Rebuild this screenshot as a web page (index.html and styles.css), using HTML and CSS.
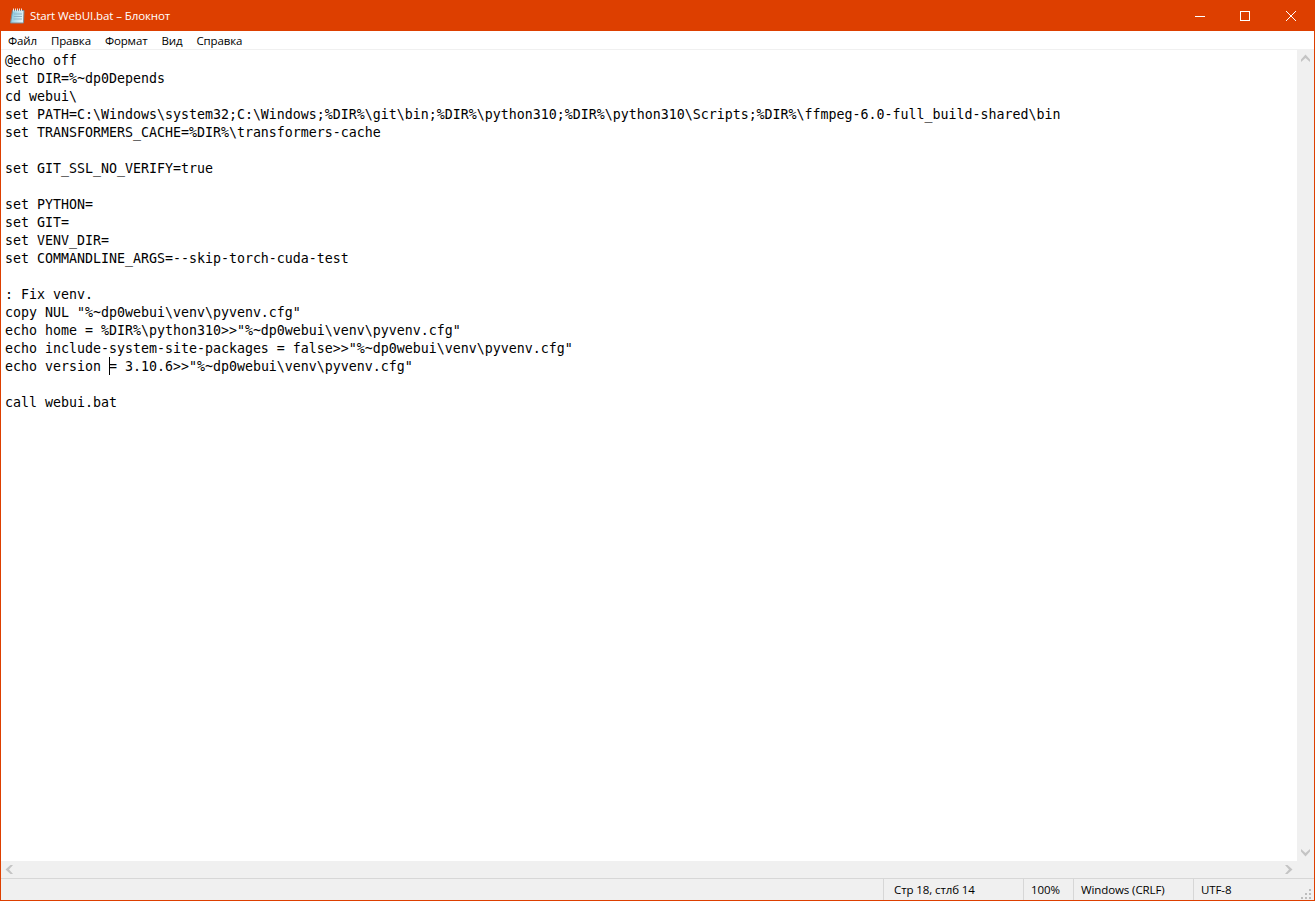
FILE: index.html
```html
<!DOCTYPE html>
<html lang="ru">
<head>
<meta charset="utf-8">
<title>Start WebUI.bat – Блокнот</title>
<link rel="stylesheet" href="styles.css">
</head>
<body>
<div class="window">
  <header class="titlebar">
    <svg class="app-icon" width="16" height="16" viewBox="0 0 16 16">
      <defs><linearGradient id="pad" x1="0" y1="0" x2="1" y2="0.3"><stop offset="0" stop-color="#6fbcd8"/><stop offset="0.55" stop-color="#b5e0ee"/><stop offset="1" stop-color="#e3f3f8"/></linearGradient></defs>
      <path d="M3.500 2.500h11.500l-0.500 12.500H1.500z" fill="url(#pad)" stroke="#7c8d96" stroke-width="1"/>
      <path d="M5 6h8M4.700 8.500h8.300M4.400 11h8.600" stroke="#8fb4c6" stroke-width="1"/>
      <path d="M4.500 0.500v3M6.500 0.500v3M8.500 0.500v3M10.500 0.500v3M12.500 0.500v3" stroke="#e8e8e8" stroke-width="1"/>
    </svg>
    <span class="title">Start WebUI.bat – Блокнот</span>
    <div class="controls">
      <svg class="ctl" width="46" height="30" viewBox="0 0 46 30"><path d="M19 15.500h10" stroke="#fff" fill="none"/></svg>
      <svg class="ctl" width="46" height="30" viewBox="0 0 46 30"><rect x="18.500" y="10.500" width="9" height="9" stroke="#fff" fill="none"/></svg>
      <svg class="ctl" width="46" height="30" viewBox="0 0 46 30"><path d="M18 10l10 10M28 10l-10 10" stroke="#fff" fill="none"/></svg>
    </div>
  </header>
  <nav class="menubar">
    <span class="menu-item">Файл</span>
    <span class="menu-item">Правка</span>
    <span class="menu-item">Формат</span>
    <span class="menu-item">Вид</span>
    <span class="menu-item">Справка</span>
  </nav>
  <div class="editor">
    <div class="editor-row">
      <div class="text-wrap">
<pre class="text">@echo off
set DIR=%~dp0Depends
cd webui\
set PATH=C:\Windows\system32;C:\Windows;%DIR%\git\bin;%DIR%\python310;%DIR%\python310\Scripts;%DIR%\ffmpeg-6.0-full_build-shared\bin
set TRANSFORMERS_CACHE=%DIR%\transformers-cache

set GIT_SSL_NO_VERIFY=true

set PYTHON=
set GIT=
set VENV_DIR=
set COMMANDLINE_ARGS=--skip-torch-cuda-test

: Fix venv.
copy NUL "%~dp0webui\venv\pyvenv.cfg"
echo home = %DIR%\python310&gt;&gt;"%~dp0webui\venv\pyvenv.cfg"
echo include-system-site-packages = false&gt;&gt;"%~dp0webui\venv\pyvenv.cfg"
echo version <span class="caret"></span>= 3.10.6&gt;&gt;"%~dp0webui\venv\pyvenv.cfg"

call webui.bat</pre>
      </div>
      <div class="vscroll">
        <svg width="17" height="17" viewBox="0 0 17 17"><path d="M8.500 4.500L13 9.500v2.500L8.500 8 4 12V9.500z" fill="#c4c4c4"/></svg>
        <svg width="17" height="17" viewBox="0 0 17 17"><path d="M8.500 12.500L13 7.500V5L8.500 9 4 5v2.500z" fill="#c4c4c4"/></svg>
      </div>
    </div>
    <div class="hscroll">
      <svg width="17" height="17" viewBox="0 0 17 17"><path d="M4.500 8.500L9.500 4H12L8 8.500 12 13H9.500z" fill="#c4c4c4"/></svg>
      <svg width="17" height="17" viewBox="0 0 17 17"><path d="M12.500 8.500L7.500 4H5L9 8.500 5 13h2.500z" fill="#c4c4c4"/></svg>
      <div class="corner"></div>
    </div>
  </div>
  <footer class="statusbar">
    <span class="cell cell-pos">Стр 18, стлб 14</span>
    <span class="cell cell-zoom">100%</span>
    <span class="cell cell-eol">Windows (CRLF)</span>
    <span class="cell cell-enc">UTF-8</span>
    <svg class="grip" width="12" height="12" viewBox="0 0 12 12"><path d="M8 2h2v2H8zM4 6h2v2H4zM8 6h2v2H8zM0 10h2v2H0zM4 10h2v2H4zM8 10h2v2H8z" fill="#bdbdbd"/></svg>
  </footer>
</div>
</body>
</html>
```
FILE: styles.css
```css
* { box-sizing: border-box; }
html, body { margin: 0; height: 100%; overflow: hidden; }
body { font-family: "Open Sans", "Noto Sans", sans-serif; font-size: 12px; color: #000; }
.window {
  width: 1315px;
  height: 901px;
  display: flex;
  flex-direction: column;
  border: 1px solid #dd3f00;
  border-top: 0;
  background: #fff;
}
.titlebar {
  height: 31px;
  flex: none;
  margin: 0 -1px;
  background: #dd3f00;
  display: flex;
  align-items: center;
  padding-left: 9px;
  padding-right: 1px;
  color: #fff;
}
.app-icon { flex: none; margin-right: 5px; }
.title { font-size: 11.500px; letter-spacing: -0.1px; }
.controls { margin-left: auto; display: flex; }
.ctl { display: block; }
.menubar {
  height: 19px;
  flex: none;
  display: flex;
  align-items: center;
  background: #fff;
  border-bottom: 1px solid #f0f0f0;
}
.menu-item { padding: 0 7px; font-size: 11.500px; letter-spacing: -0.13px; }
.editor { flex: 1; min-height: 0; display: flex; flex-direction: column; }
.editor-row { flex: 1; min-height: 0; display: flex; }
.text-wrap { flex: 1; min-width: 0; overflow: hidden; padding: 2px 0 0 4px; }
.text {
  margin: 0;
  font-family: "DejaVu Sans Mono", "Liberation Mono", monospace;
  font-size: 13.290px;
  line-height: 18px;
  color: #000;
  white-space: pre;
}
.caret { position: relative; }
.caret::after {
  content: "";
  position: absolute;
  left: 0;
  top: -2px;
  width: 1px;
  height: 18px;
  background: #000;
}
.vscroll {
  width: 17px;
  flex: none;
  background: #f0f0f0;
  display: flex;
  flex-direction: column;
  justify-content: space-between;
}
.vscroll svg, .hscroll svg { display: block; flex: none; }
.hscroll {
  height: 17px;
  flex: none;
  background: #f0f0f0;
  display: flex;
  justify-content: flex-start;
}
.hscroll svg:nth-of-type(2) { margin-left: auto; }
.corner { width: 17px; flex: none; }
.statusbar {
  height: 22px;
  flex: none;
  background: #f0f0f0;
  border-top: 1px solid #d7d7d7;
  display: flex;
  align-items: center;
  position: relative;
  padding-left: 882px;
}
.cell {
  height: 100%;
  display: flex;
  align-items: center;
  padding-left: 10px;
  border-left: 1px solid #d7d7d7;
  font-size: 11.500px;
  letter-spacing: -0.1px;
  flex: none;
}
.cell-pos { width: 140px; }
.cell-zoom { width: 50px; padding-left: 7px; }
.cell-eol { width: 120px; padding-left: 7px; }
.cell-enc { width: 100px; padding-left: 7px; }
.grip { position: absolute; right: 1px; bottom: 1px; }
```
